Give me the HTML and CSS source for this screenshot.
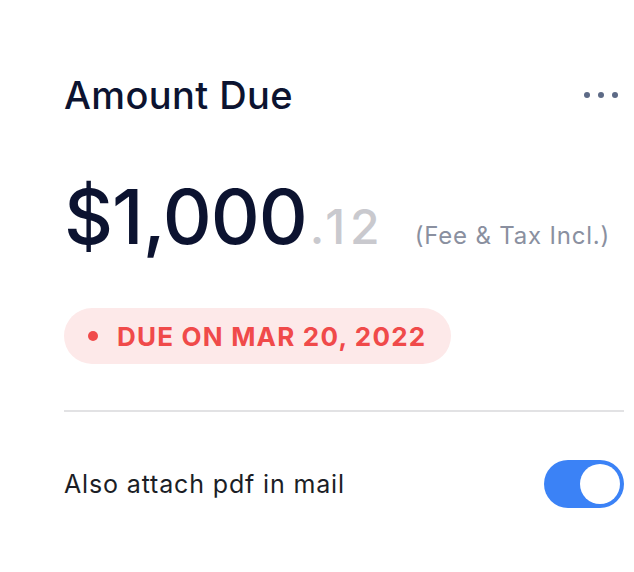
FILE: index.html
```html
<!DOCTYPE html>
<html>
<head>
<meta charset="utf-8">
<link rel="stylesheet" href="styles.css">
</head>
<body>
<div class="card">
  <div class="header">
    <h1 class="title">Amount Due</h1>
    <button class="more" aria-label="More options">
      <span class="dot"></span><span class="dot"></span><span class="dot"></span>
    </button>
  </div>
  <div class="amount-row">
    <div class="amount"><span class="main">$1,000</span><span class="cents">.12</span></div>
    <div class="note">(Fee &amp; Tax Incl.)</div>
  </div>
  <div class="badge"><span class="badge-dot"></span><span class="badge-text">DUE ON MAR 20, 2022</span></div>
  <hr class="divider">
  <div class="option">
    <span class="option-label">Also attach pdf in mail</span>
    <span class="toggle on"><span class="knob"></span></span>
  </div>
</div>
</body>
</html>
```
FILE: styles.css
```css
html, body {
  margin: 0;
  padding: 0;
  background: #ffffff;
}
body {
  font-family: Inter, "Noto Sans", sans-serif;
  color: #0c1330;
}
.card {
  padding: 70px 10px 0 64px;
}
.header {
  display: flex;
  justify-content: space-between;
  align-items: center;
  height: 50px;
}
.title {
  margin: 0;
  font-size: 38px;
  font-weight: 500;
  letter-spacing: 0.4px;
  color: #0c1330;
}
.more {
  display: flex;
  gap: 8px;
  padding: 0;
  margin-right: 6px;
  border: 0;
  background: none;
}
.dot {
  width: 6px;
  height: 6px;
  border-radius: 50%;
  background: #5d6a86;
}
.amount-row {
  display: flex;
  align-items: baseline;
  margin-top: 50px;
}
.amount {
  font-weight: 500;
}
.main {
  font-size: 76px;
  letter-spacing: -1px;
  color: #0c1330;
}
.cents {
  font-size: 48px;
  color: #c9c9ce;
  letter-spacing: 5px;
  margin-left: 3px;
}
.note {
  margin-left: 30px;
  font-size: 24px;
  letter-spacing: 0.8px;
  color: #8a90a0;
}
.badge {
  display: inline-flex;
  align-items: center;
  height: 56px;
  margin-top: 46px;
  padding: 0 25px 0 24px;
  border-radius: 28px;
  background: #fde9e9;
}
.badge-dot {
  width: 10px;
  height: 10px;
  border-radius: 50%;
  background: #f04a4a;
  margin-right: 19px;
}
.badge-text {
  font-size: 26px;
  font-weight: 700;
  letter-spacing: 1.2px;
  color: #f04a4a;
}
.divider {
  margin: 46px 0 0 0;
  border: 0;
  height: 2px;
  background: #e2e2e4;
}
.option {
  display: flex;
  justify-content: space-between;
  align-items: center;
  margin-top: 48px;
}
.option-label {
  font-size: 25px;
  letter-spacing: 0.85px;
  color: #1b1e26;
}
.toggle {
  position: relative;
  display: block;
  width: 80px;
  height: 48px;
  border-radius: 24px;
  background: #3b82f6;
}
.knob {
  position: absolute;
  top: 4px;
  right: 4px;
  width: 40px;
  height: 40px;
  border-radius: 50%;
  background: #ffffff;
}
```
